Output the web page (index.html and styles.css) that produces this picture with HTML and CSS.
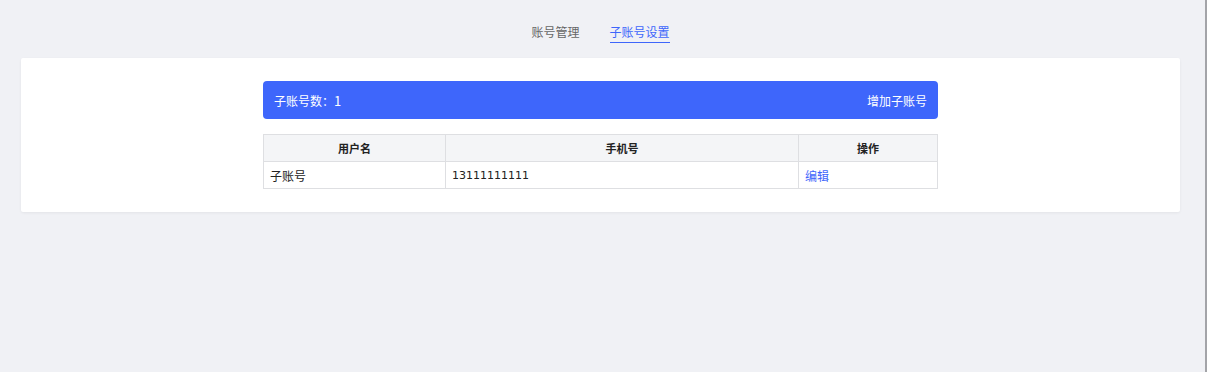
FILE: index.html
```html
<!DOCTYPE html>
<html lang="zh-CN">
<head>
  <meta charset="UTF-8" />
  <meta name="viewport" content="width=device-width, initial-scale=1.0"/>
  <title>子账号设置</title>
  <link rel="stylesheet" href="styles.css">
</head>
<body>
  <div class="page">
    <div class="tabs">
      <a class="tab" href="#">账号管理</a>
      <a class="tab active" href="#">子账号设置</a>
    </div>

    <div class="card">
      <div class="inner">
        <div class="banner">
          <span class="count">子账号数：<b>1</b></span>
          <a class="add" href="#">增加子账号</a>
        </div>

        <table class="list">
          <thead>
            <tr>
              <th class="col-name">用户名</th>
              <th class="col-phone">手机号</th>
              <th class="col-op">操作</th>
            </tr>
          </thead>
          <tbody>
            <tr>
              <td>子账号</td>
              <td class="phone">13111111111</td>
              <td><a class="edit" href="#">编辑</a></td>
            </tr>
          </tbody>
        </table>
      </div>
    </div>
  </div>
</body>
</html>
```

FILE: styles.css
```css
html {
  background-color: #f0f1f5;
}

body {
  margin: 0;
  width: 1205px;
  min-height: 100vh;
  border-right: 2px solid #a3a4a8;
  font-family: "Noto Sans CJK SC", "Noto Sans", sans-serif;
  color: #333;
}

a {
  text-decoration: none;
}

.page {
  padding: 0 25px 0 21px;
}

.tabs {
  display: flex;
  justify-content: center;
  gap: 30px;
  padding-top: 23px;
}

.tab {
  font-size: 12px;
  line-height: 17px;
  padding-bottom: 2px;
  color: #666;
  border-bottom: 1px solid transparent;
}

.tab.active {
  color: #3e66fb;
  border-bottom-color: #3e66fb;
}

.card {
  margin-top: 15px;
  background-color: #fff;
  border-radius: 2px;
  box-shadow: 0 1px 3px rgba(0, 0, 0, 0.06);
  padding: 23px 0;
}

.inner {
  width: 675px;
  margin: 0 auto;
}

.banner {
  display: flex;
  justify-content: space-between;
  align-items: center;
  height: 38px;
  padding: 0 11px;
  background-color: #3e66fb;
  border-radius: 4px;
  color: #fff;
  font-size: 12px;
}

.banner b {
  font-weight: normal;
  font-size: 13px;
}

.add {
  color: #fff;
}

.list {
  width: 100%;
  margin-top: 15px;
  border-collapse: collapse;
  font-size: 12px;
}

.list th,
.list td {
  border: 1px solid #dedfe2;
  height: 26px;
  padding: 0 6px;
}

.list th {
  background-color: #f4f5f7;
  font-weight: bold;
  font-size: 11px;
  color: #222;
  text-align: center;
}

.list td {
  text-align: left;
  color: #222;
}

.list td.phone {
  font-family: "DejaVu Sans", sans-serif;
  font-size: 11px;
}

.col-name {
  width: 169px;
}

.col-phone {
  width: 340px;
}

.edit {
  color: #3e66fb;
}
```
